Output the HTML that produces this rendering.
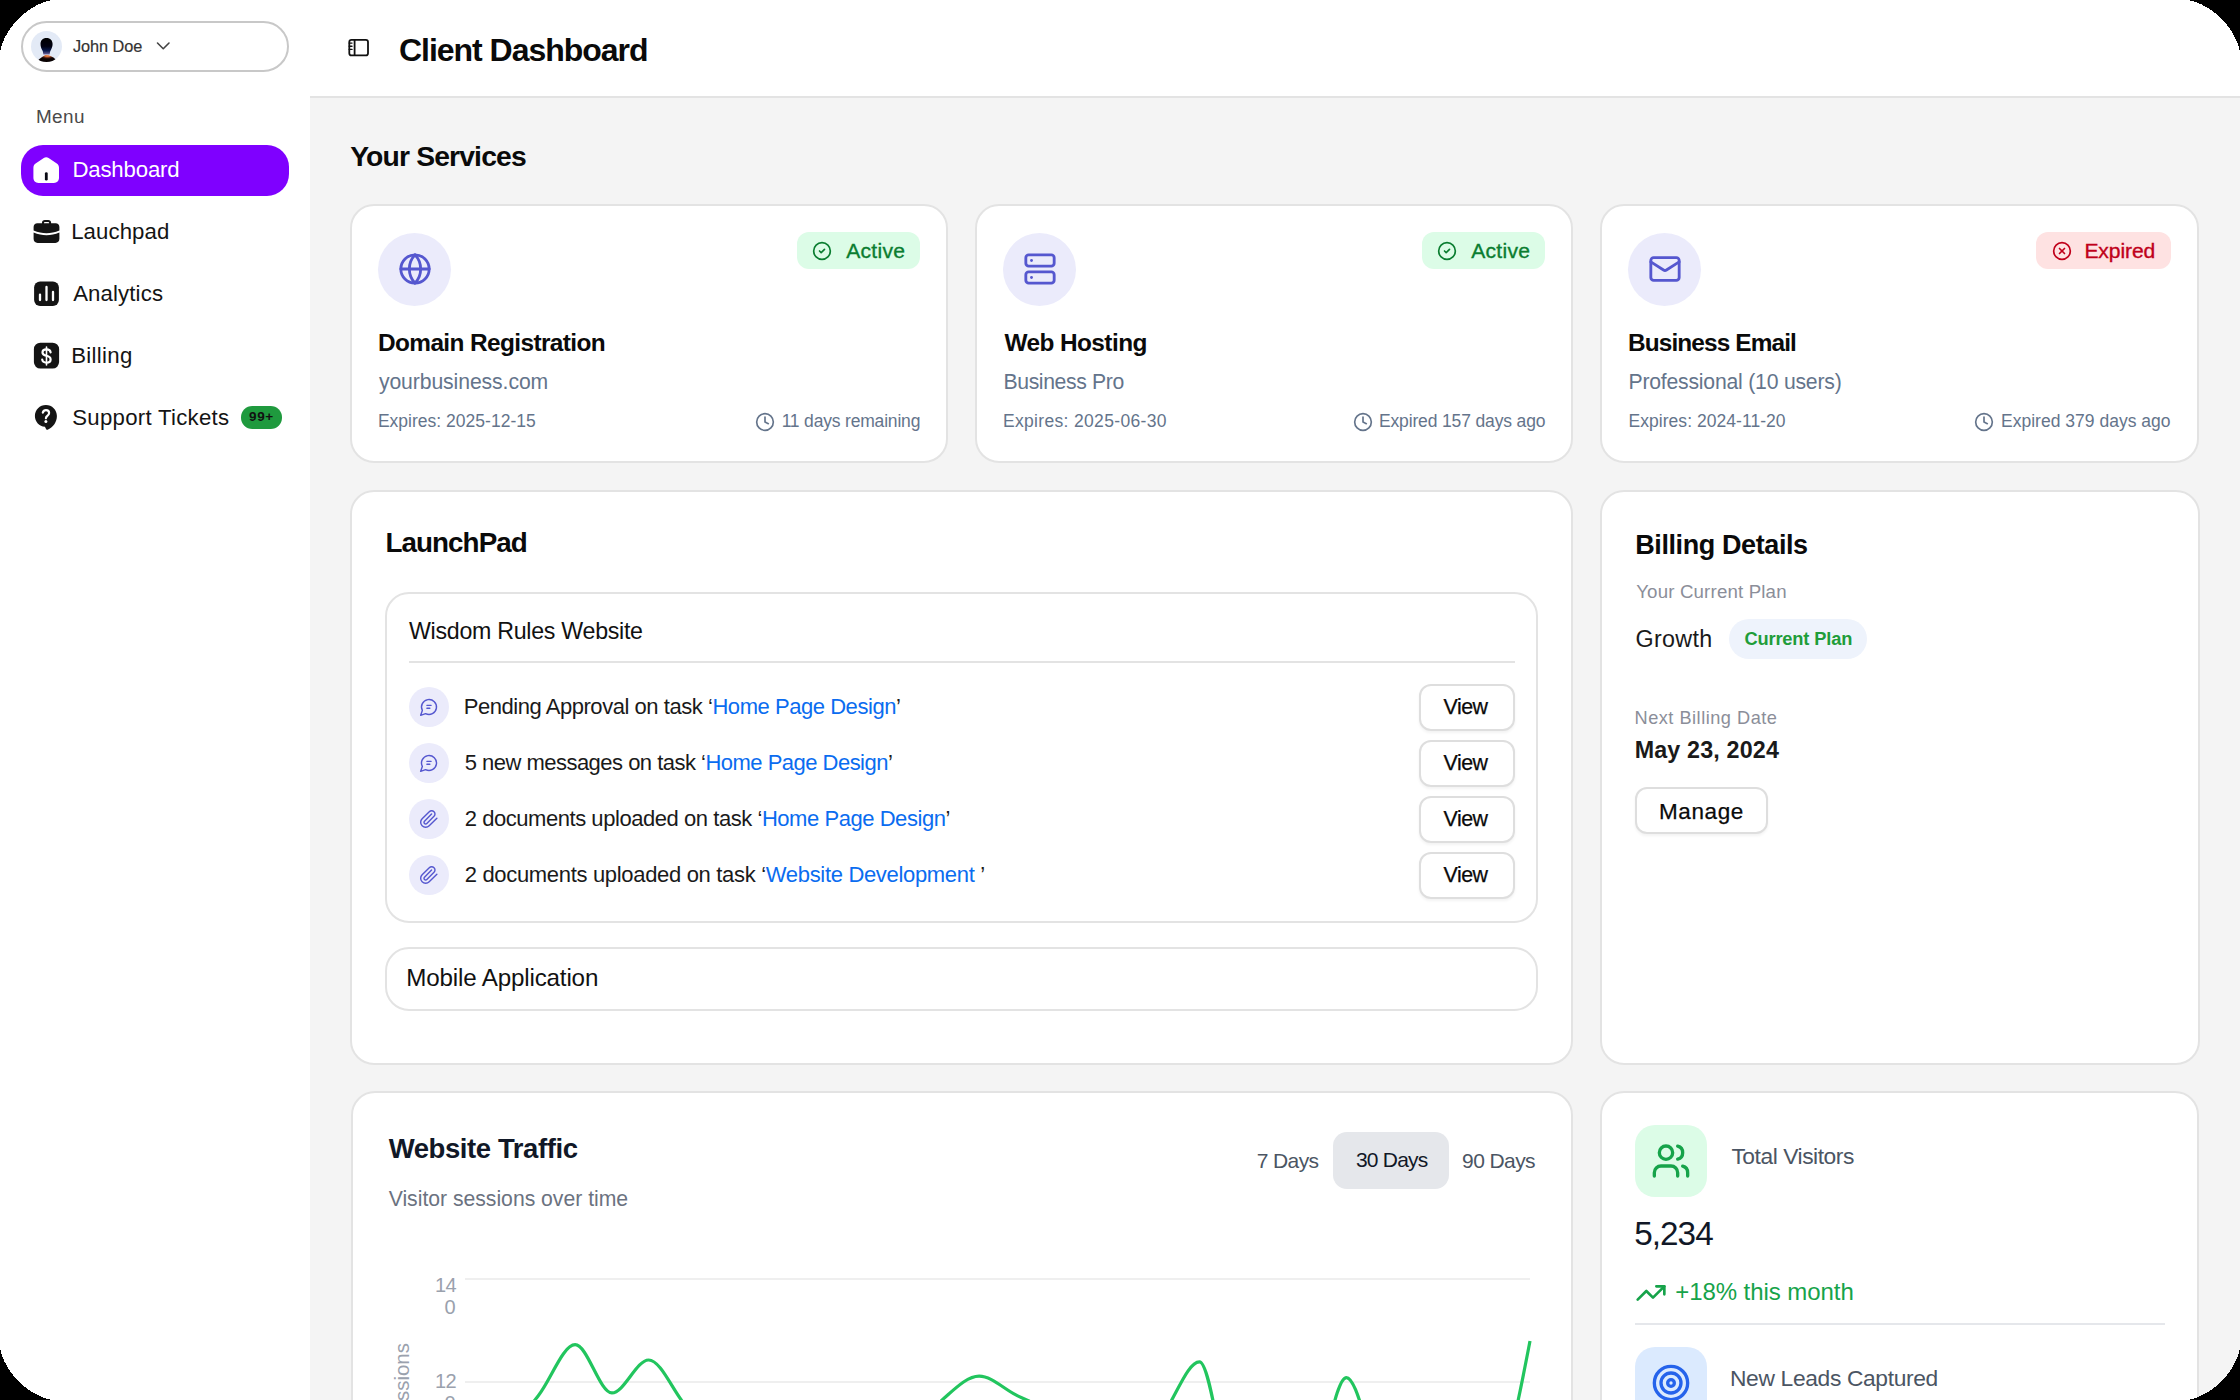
<!DOCTYPE html>
<html><head><meta charset="utf-8"><title>Client Dashboard</title>
<style>
html,body{margin:0;padding:0;background:#000;}
body{width:2240px;height:1400px;overflow:hidden;position:relative;font-family:"Liberation Sans", sans-serif;}
#app{position:absolute;left:0;top:0;width:2240px;height:1400px;overflow:hidden;background:#fff;}
#app div,#app svg{position:absolute;box-sizing:border-box;}
.t{line-height:1;white-space:nowrap;}
.card{background:#fff;border:2px solid #e3e3e3;border-radius:24px;}
</style></head><body><div id="app">
<div class="" style="left:310px;top:0px;width:1930px;height:96px;background:#fff;"></div>
<div class="" style="left:310px;top:96px;width:1930px;height:2px;background:#e3e3e3;"></div>
<div class="" style="left:310px;top:98px;width:1930px;height:1302px;background:#f4f4f4;"></div>
<div class="" style="left:21px;top:21px;width:268px;height:51px;border:2px solid #c8c8c8;border-radius:26px;"></div>
<div class="" style="left:31px;top:31px;width:31px;height:31px;background:#e3eaf6;border-radius:50%;overflow:hidden;"><svg width="31" height="31" viewBox="0 0 31 31" style="position:absolute;left:0;top:0"><defs><linearGradient id="ag" x1="0" y1="0" x2="0" y2="1"><stop offset="0" stop-color="#000"/><stop offset="0.5" stop-color="#000010"/><stop offset="0.78" stop-color="#0a1a50"/><stop offset="1" stop-color="#7a6aa0"/></linearGradient><radialGradient id="sg" cx="16.5" cy="24.5" r="8" gradientTransform="translate(16.5 24.5) scale(1 0.45) translate(-16.5 -24.5)" gradientUnits="userSpaceOnUse"><stop offset="0" stop-color="#f08a50"/><stop offset="0.35" stop-color="#d06a3a"/><stop offset="0.7" stop-color="#3a140c"/><stop offset="1" stop-color="#0a0202"/></radialGradient></defs><path d="M15.5 7 C11.6 7 9.5 9.6 9.5 13 C9.5 15.6 10.4 17.6 11.3 19.2 C11.9 20.3 12.2 21.5 12.3 23.6 L18.7 23.6 C18.8 21.5 19.2 20.3 19.8 19.2 C20.8 17.4 21.6 15.4 21.6 13 C21.6 9.6 19.4 7 15.5 7 Z" fill="url(#ag)"/><path d="M6.9 29.6 C8.6 27.6 11.5 25.5 13.5 24.5 C14.8 23.9 16.8 23.9 18.2 24.5 C20.5 25.5 23.5 27 24.9 28.6 C24.2 30.5 20 32 15.5 32 C11 32 7.5 31 6.9 29.6 Z" fill="url(#sg)"/></svg></div>
<div id="johndoe" class="t" style="left:72.9px;top:37.60px;font-size:16.3px;font-weight:400;color:#333;letter-spacing:-0.054px;-webkit-text-stroke:0.2px #333;">John Doe</div>
<svg class="ic" style="left:155px;top:40px" width="16" height="12" viewBox="0 0 16 12"><path d="M2.5 3 L8.25 8.7 L14 3" fill="none" stroke="#444" stroke-width="1.6" stroke-linecap="round" stroke-linejoin="round"/></svg>
<div id="menu" class="t" style="left:35.9px;top:108.00px;font-size:18.9px;font-weight:400;color:#4a4a4a;letter-spacing:0.465px;">Menu</div>
<div class="" style="left:21px;top:145px;width:268px;height:51px;background:#7f00ff;border-radius:22px;"></div>
<svg class="ic" style="left:28px;top:150px" width="40" height="40" viewBox="0 0 40 40"><path d="M18.2 7.2 C17.3 7.2 16.5 7.5 15.8 8 L7.6 13.6 C6.2 14.6 5.4 16 5.4 17.7 L5.4 27.8 C5.4 30.9 7.4 32.9 10.5 32.9 L25.9 32.9 C29 32.9 31 30.9 31 27.8 L31 17.7 C31 16 30.2 14.6 28.8 13.6 L20.6 8 C19.9 7.5 19.1 7.2 18.2 7.2 Z" fill="#fff"/><path d="M18.3 23.6 L18.3 29.2" stroke="#0a0a14" stroke-width="2.8" stroke-linecap="round"/></svg>
<div id="dash" class="t" style="left:72.4px;top:158.51px;font-size:22.2px;font-weight:400;color:#fff;letter-spacing:-0.158px;">Dashboard</div>
<svg class="ic" style="left:28px;top:212px" width="40" height="40" viewBox="0 0 40 40"><path d="M14 11.3 L14 10.6 C14 9 15.2 7.9 16.8 7.9 L20.3 7.9 C21.9 7.9 23.1 9 23.1 10.6 L23.1 11.3 L27.6 11.3 C29.8 11.3 31.4 12.9 31.4 15.1 L31.4 18.4 C27 20.2 22.8 21.2 18.5 21.2 C14.2 21.2 10 20.2 5.6 18.4 L5.6 15.1 C5.6 12.9 7.2 11.3 9.4 11.3 Z M16 11.3 L21.1 11.3 L21.1 10.7 C21.1 10.2 20.8 9.9 20.3 9.9 L16.8 9.9 C16.3 9.9 16 10.2 16 10.7 Z" fill="#141414" fill-rule="evenodd"/><path d="M5.6 20.4 C10 22.2 14.2 23.2 18.5 23.2 C22.8 23.2 27 22.2 31.4 20.4 L31.4 26.8 C31.4 29.2 29.8 30.9 27.4 30.9 L9.6 30.9 C7.2 30.9 5.6 29.2 5.6 26.8 Z" fill="#141414"/></svg>
<div id="lauch" class="t" style="left:71.2px;top:221.21px;font-size:22.2px;font-weight:400;color:#141414;letter-spacing:0.089px;">Lauchpad</div>
<svg class="ic" style="left:28px;top:274px" width="40" height="40" viewBox="0 0 40 40"><rect x="6.1" y="7.4" width="24.8" height="24.6" rx="6" fill="#141414"/><path d="M12 20.6 L12 26 M18.5 12.9 L18.5 26 M25 18 L25 26" stroke="#fff" stroke-width="2.3" stroke-linecap="round"/></svg>
<div id="analytics" class="t" style="left:73.2px;top:283.21px;font-size:22.2px;font-weight:400;color:#141414;letter-spacing:0.125px;">Analytics</div>
<svg class="ic" style="left:28px;top:336px" width="40" height="40" viewBox="0 0 40 40"><rect x="5.9" y="6.7" width="25.2" height="25.9" rx="6.5" fill="#141414"/><path d="M18.5 11 L18.5 28.9" stroke="#fff" stroke-width="1.6" stroke-linecap="round"/><path d="M22.6 16.3 C22.4 14.5 20.9 13.3 18.5 13.3 C16 13.3 14.5 14.6 14.5 16.4 C14.5 18.3 16.1 19.1 18.5 19.7 C21 20.3 22.6 21.2 22.6 23.4 C22.6 25.3 20.9 26.6 18.5 26.6 C16 26.6 14.4 25.4 14.2 23.5" fill="none" stroke="#fff" stroke-width="2.2" stroke-linecap="round"/></svg>
<div id="billing" class="t" style="left:71.2px;top:345.21px;font-size:22.2px;font-weight:400;color:#141414;letter-spacing:0.333px;">Billing</div>
<svg class="ic" style="left:28px;top:398px" width="40" height="40" viewBox="0 0 40 40"><path d="M17.9 6.9 C11.8 6.9 6.9 11.8 6.9 17.9 C6.9 23.6 11.3 28.3 16.9 28.8 L18.2 31.3 C18.7 32 19.5 32 20.1 31.4 C25.2 29.2 28.9 24 28.9 17.9 C28.9 11.8 24 6.9 17.9 6.9 Z" fill="#141414"/><path d="M14.8 14.6 C15.3 13 16.5 12.2 18 12.2 C19.9 12.2 21.1 13.3 21.1 14.9 C21.1 16.7 19.3 17.6 18.3 19 L17.9 20.3" fill="none" stroke="#fff" stroke-width="2.2" stroke-linecap="round"/><circle cx="17.9" cy="23.6" r="1.5" fill="#fff"/></svg>
<div id="support" class="t" style="left:72.2px;top:407.21px;font-size:22.2px;font-weight:400;color:#141414;letter-spacing:0.286px;">Support Tickets</div>
<div class="" style="left:240.7px;top:406.4px;width:41.3px;height:22.6px;background:#1f9a3e;border-radius:11.3px;"></div>
<div id="badge99" class="t" style="left:249.0px;top:410.47px;font-size:13.5px;font-weight:700;color:#111;letter-spacing:0.625px;">99+</div>
<svg class="ic" style="left:346px;top:37px" width="25" height="22" viewBox="0 0 25 22"><rect x="3.3" y="2.9" width="18.7" height="15.5" rx="2.2" fill="none" stroke="#111" stroke-width="1.8"/><path d="M8.6 2.9 L8.6 18.4" stroke="#111" stroke-width="1.8"/><path d="M3.2 6.1 L6 6.1 M3.2 9.25 L6 9.25 M3.2 12.4 L6 12.4" stroke="#111" stroke-width="1.4" stroke-linecap="round"/></svg>
<div id="title" class="t" style="left:399.0px;top:34.31px;font-size:32px;font-weight:700;color:#0a0a0a;letter-spacing:-1.033px;">Client Dashboard</div>
<div id="yoursvc" class="t" style="left:350.2px;top:142.14px;font-size:28.3px;font-weight:700;color:#0a0a0a;letter-spacing:-0.849px;">Your Services</div>
<div class="card" style="left:350px;top:204px;width:598px;height:259px;"></div>
<div class="" style="left:378px;top:232.5px;width:73px;height:73px;background:#ebebfb;border-radius:50%;"></div>
<svg class="ic" style="left:397.5px;top:252px;" width="34" height="34" viewBox="0 0 24 24" fill="none" stroke="#5557cf" stroke-width="2" stroke-linecap="round" stroke-linejoin="round"><circle cx="12" cy="12" r="10"/><path d="M12 2a14.5 14.5 0 0 0 0 20 14.5 14.5 0 0 0 0-20"/><path d="M2 12h20"/></svg>
<div class="" style="left:797px;top:232.4px;width:123px;height:36.5px;background:#dcfce7;border-radius:12px;"></div>
<svg class="ic" style="left:812.3px;top:240.6px;" width="20" height="20" viewBox="0 0 24 24" fill="none" stroke="#0a7d30" stroke-width="2" stroke-linecap="round" stroke-linejoin="round"><circle cx="12" cy="12" r="10"/><path d="m9 12 2 2 4-4"/></svg>
<div id="badge0" class="t" style="left:846.2px;top:239.74px;font-size:21.1px;font-weight:400;color:#0a7d30;letter-spacing:0.28px;-webkit-text-stroke:0.35px #0a7d30;">Active</div>
<div id="name0" class="t" style="left:378.0px;top:331.15px;font-size:24.4px;font-weight:700;color:#0a0a0a;letter-spacing:-0.603px;">Domain Registration</div>
<div id="sub0" class="t" style="left:378.9px;top:371.25px;font-size:21.2px;font-weight:400;color:#64748b;letter-spacing:-0.095px;">yourbusiness.com</div>
<div id="exp0" class="t" style="left:377.9px;top:413.09px;font-size:17.5px;font-weight:400;color:#64748b;letter-spacing:0.017px;">Expires: 2025-12-15</div>
<div id="rt0" class="t" style="margin-right:-0.2px;top:413.49px;font-size:17.5px;font-weight:400;color:#64748b;letter-spacing:-0.185px;left:auto;right:1320px;">11 days remaining</div>
<svg class="ic" style="left:755.1px;top:412.4px;" width="20" height="20" viewBox="0 0 24 24" fill="none" stroke="#64748b" stroke-width="2" stroke-linecap="round" stroke-linejoin="round"><circle cx="12" cy="12" r="10"/><polyline points="12 6 12 12 16 14"/></svg>
<div class="card" style="left:975px;top:204px;width:598px;height:259px;"></div>
<div class="" style="left:1003px;top:232.5px;width:73px;height:73px;background:#ebebfb;border-radius:50%;"></div>
<svg class="ic" style="left:1022.5px;top:252px;" width="34" height="34" viewBox="0 0 24 24" fill="none" stroke="#5557cf" stroke-width="2" stroke-linecap="round" stroke-linejoin="round"><rect width="20" height="8" x="2" y="2" rx="2" ry="2"/><rect width="20" height="8" x="2" y="14" rx="2" ry="2"/><line x1="6" x2="6.01" y1="6" y2="6"/><line x1="6" x2="6.01" y1="18" y2="18"/></svg>
<div class="" style="left:1422px;top:232.4px;width:123px;height:36.5px;background:#dcfce7;border-radius:12px;"></div>
<svg class="ic" style="left:1437.3px;top:240.6px;" width="20" height="20" viewBox="0 0 24 24" fill="none" stroke="#0a7d30" stroke-width="2" stroke-linecap="round" stroke-linejoin="round"><circle cx="12" cy="12" r="10"/><path d="m9 12 2 2 4-4"/></svg>
<div id="badge1" class="t" style="left:1471.2px;top:239.74px;font-size:21.1px;font-weight:400;color:#0a7d30;letter-spacing:0.28px;-webkit-text-stroke:0.35px #0a7d30;">Active</div>
<div id="name1" class="t" style="left:1004.4px;top:331.15px;font-size:24.4px;font-weight:700;color:#0a0a0a;letter-spacing:-0.56px;">Web Hosting</div>
<div id="sub1" class="t" style="left:1003.5px;top:371.25px;font-size:21.2px;font-weight:400;color:#64748b;letter-spacing:-0.379px;">Business Pro</div>
<div id="exp1" class="t" style="left:1002.9px;top:413.09px;font-size:17.5px;font-weight:400;color:#64748b;letter-spacing:0.334px;">Expires: 2025-06-30</div>
<div id="rt1" class="t" style="margin-right:-0.4px;top:413.49px;font-size:17.5px;font-weight:400;color:#64748b;letter-spacing:-0.143px;left:auto;right:695px;">Expired 157 days ago</div>
<svg class="ic" style="left:1352.5px;top:412.4px;" width="20" height="20" viewBox="0 0 24 24" fill="none" stroke="#64748b" stroke-width="2" stroke-linecap="round" stroke-linejoin="round"><circle cx="12" cy="12" r="10"/><polyline points="12 6 12 12 16 14"/></svg>
<div class="card" style="left:1600px;top:204px;width:599px;height:259px;"></div>
<div class="" style="left:1628px;top:232.5px;width:73px;height:73px;background:#ebebfb;border-radius:50%;"></div>
<svg class="ic" style="left:1647.5px;top:252px;" width="34" height="34" viewBox="0 0 24 24" fill="none" stroke="#5557cf" stroke-width="2" stroke-linecap="round" stroke-linejoin="round"><rect width="20" height="16" x="2" y="4" rx="2"/><path d="m22 7-8.97 5.7a1.94 1.94 0 0 1-2.06 0L2 7"/></svg>
<div class="" style="left:2036px;top:232.4px;width:135px;height:36.5px;background:#fee2e2;border-radius:12px;"></div>
<svg class="ic" style="left:2051.8px;top:240.8px;" width="20" height="20" viewBox="0 0 24 24" fill="none" stroke="#c0001a" stroke-width="2" stroke-linecap="round" stroke-linejoin="round"><circle cx="12" cy="12" r="10"/><path d="m15 9-6 6"/><path d="m9 9 6 6"/></svg>
<div id="badge2" class="t" style="left:2084.4px;top:239.74px;font-size:21.1px;font-weight:400;color:#c0001a;letter-spacing:-0.103px;-webkit-text-stroke:0.35px #c0001a;">Expired</div>
<div id="name2" class="t" style="left:1628.0px;top:331.15px;font-size:24.4px;font-weight:700;color:#0a0a0a;letter-spacing:-0.883px;">Business Email</div>
<div id="sub2" class="t" style="left:1628.5px;top:371.25px;font-size:21.2px;font-weight:400;color:#64748b;letter-spacing:-0.211px;">Professional (10 users)</div>
<div id="exp2" class="t" style="left:1628.5px;top:413.09px;font-size:17.5px;font-weight:400;color:#64748b;letter-spacing:0.043px;">Expires: 2024-11-20</div>
<div id="rt2" class="t" style="margin-right:0.4px;top:413.49px;font-size:17.5px;font-weight:400;color:#64748b;letter-spacing:0.016px;left:auto;right:69px;">Expired 379 days ago</div>
<svg class="ic" style="left:1974.4px;top:412.4px;" width="20" height="20" viewBox="0 0 24 24" fill="none" stroke="#64748b" stroke-width="2" stroke-linecap="round" stroke-linejoin="round"><circle cx="12" cy="12" r="10"/><polyline points="12 6 12 12 16 14"/></svg>
<div class="card" style="left:350px;top:490px;width:1223px;height:575px;"></div>
<div id="lp" class="t" style="left:385.4px;top:529.47px;font-size:27.8px;font-weight:700;color:#0a0a0a;letter-spacing:-0.925px;">LaunchPad</div>
<div class="card" style="left:385px;top:592px;width:1153px;height:331px;"></div>
<div id="wrw" class="t" style="left:409.0px;top:619.66px;font-size:23.2px;font-weight:400;color:#111;letter-spacing:-0.276px;">Wisdom Rules Website</div>
<div class="" style="left:409px;top:660.5px;width:1106px;height:2px;background:#e3e3e3;"></div>
<div class="" style="left:408.5px;top:687px;width:40px;height:40px;background:#ebebfb;border-radius:50%;"></div>
<svg class="ic" style="left:418.5px;top:697px;" width="20" height="20" viewBox="0 0 24 24" fill="none" stroke="#5557cf" stroke-width="1.7" stroke-linecap="round" stroke-linejoin="round"><path d="M7.9 20 A9 9 0 1 0 4 16.1 L2 22 Z"/><path d="M9.5 10h5"/><path d="M9.5 13.5h3.5"/></svg>
<div id="row0" class="t" style="left:463.7px;top:695.98px;font-size:22px;font-weight:400;color:#1a1a1a;letter-spacing:-0.453px;">Pending Approval on task ‘<span style="color:#0a6cf0">Home Page Design</span>’</div>
<div class="" style="left:1419px;top:683.5px;width:95.5px;height:47px;background:#fff;border:2px solid #dedede;border-radius:12px;box-shadow:0 2px 3px rgba(0,0,0,0.05);"></div>
<div id="view0" class="t" style="left:1443.6px;top:696.68px;font-size:21.4px;font-weight:400;color:#0a0a0a;letter-spacing:-0.529px;-webkit-text-stroke:0.25px #0a0a0a;">View</div>
<div class="" style="left:408.5px;top:743px;width:40px;height:40px;background:#ebebfb;border-radius:50%;"></div>
<svg class="ic" style="left:418.5px;top:753px;" width="20" height="20" viewBox="0 0 24 24" fill="none" stroke="#5557cf" stroke-width="1.7" stroke-linecap="round" stroke-linejoin="round"><path d="M7.9 20 A9 9 0 1 0 4 16.1 L2 22 Z"/><path d="M9.5 10h5"/><path d="M9.5 13.5h3.5"/></svg>
<div id="row1" class="t" style="left:464.7px;top:751.98px;font-size:22px;font-weight:400;color:#1a1a1a;letter-spacing:-0.517px;">5 new messages on task ‘<span style="color:#0a6cf0">Home Page Design</span>’</div>
<div class="" style="left:1419px;top:739.5px;width:95.5px;height:47px;background:#fff;border:2px solid #dedede;border-radius:12px;box-shadow:0 2px 3px rgba(0,0,0,0.05);"></div>
<div id="view1" class="t" style="left:1443.6px;top:752.68px;font-size:21.4px;font-weight:400;color:#0a0a0a;letter-spacing:-0.529px;-webkit-text-stroke:0.25px #0a0a0a;">View</div>
<div class="" style="left:408.5px;top:799px;width:40px;height:40px;background:#ebebfb;border-radius:50%;"></div>
<svg class="ic" style="left:418.5px;top:809px;" width="20" height="20" viewBox="0 0 24 24" fill="none" stroke="#5557cf" stroke-width="1.7" stroke-linecap="round" stroke-linejoin="round"><path d="m21.44 11.05-9.19 9.19a6 6 0 0 1-8.49-8.49l8.57-8.57A4 4 0 1 1 18 8.84l-8.59 8.57a2 2 0 0 1-2.83-2.83l8.49-8.48"/></svg>
<div id="row2" class="t" style="left:464.7px;top:807.98px;font-size:22px;font-weight:400;color:#1a1a1a;letter-spacing:-0.449px;">2 documents uploaded on task ‘<span style="color:#0a6cf0">Home Page Design</span>’</div>
<div class="" style="left:1419px;top:795.5px;width:95.5px;height:47px;background:#fff;border:2px solid #dedede;border-radius:12px;box-shadow:0 2px 3px rgba(0,0,0,0.05);"></div>
<div id="view2" class="t" style="left:1443.6px;top:808.68px;font-size:21.4px;font-weight:400;color:#0a0a0a;letter-spacing:-0.529px;-webkit-text-stroke:0.25px #0a0a0a;">View</div>
<div class="" style="left:408.5px;top:855px;width:40px;height:40px;background:#ebebfb;border-radius:50%;"></div>
<svg class="ic" style="left:418.5px;top:865px;" width="20" height="20" viewBox="0 0 24 24" fill="none" stroke="#5557cf" stroke-width="1.7" stroke-linecap="round" stroke-linejoin="round"><path d="m21.44 11.05-9.19 9.19a6 6 0 0 1-8.49-8.49l8.57-8.57A4 4 0 1 1 18 8.84l-8.59 8.57a2 2 0 0 1-2.83-2.83l8.49-8.48"/></svg>
<div id="row3" class="t" style="left:464.7px;top:863.98px;font-size:22px;font-weight:400;color:#1a1a1a;letter-spacing:-0.32px;">2 documents uploaded on task ‘<span style="color:#0a6cf0">Website Development </span>’</div>
<div class="" style="left:1419px;top:851.5px;width:95.5px;height:47px;background:#fff;border:2px solid #dedede;border-radius:12px;box-shadow:0 2px 3px rgba(0,0,0,0.05);"></div>
<div id="view3" class="t" style="left:1443.6px;top:864.68px;font-size:21.4px;font-weight:400;color:#0a0a0a;letter-spacing:-0.529px;-webkit-text-stroke:0.25px #0a0a0a;">View</div>
<div class="card" style="left:385px;top:947px;width:1153px;height:64px;"></div>
<div id="mobile" class="t" style="left:406.2px;top:966.41px;font-size:24.2px;font-weight:400;color:#111;letter-spacing:-0.165px;">Mobile Application</div>
<div class="card" style="left:1600px;top:490px;width:600px;height:575px;"></div>
<div id="bd" class="t" style="left:1635.2px;top:531.94px;font-size:27px;font-weight:700;color:#0a0a0a;letter-spacing:-0.402px;">Billing Details</div>
<div id="ycp" class="t" style="left:1636.2px;top:582.87px;font-size:18.7px;font-weight:400;color:#8b8e99;letter-spacing:0.156px;">Your Current Plan</div>
<div id="growth" class="t" style="left:1635.5px;top:627.88px;font-size:23.3px;font-weight:400;color:#1a1a1a;letter-spacing:0.34px;">Growth</div>
<div class="" style="left:1728.8px;top:618.8px;width:138px;height:40px;background:#eef3fc;border-radius:20px;"></div>
<div id="cp" class="t" style="left:1744.4px;top:630.41px;font-size:18.3px;font-weight:700;color:#1f9d3a;letter-spacing:-0.158px;">Current Plan</div>
<div id="nbd" class="t" style="left:1634.5px;top:709.09px;font-size:18.2px;font-weight:400;color:#8b8e99;letter-spacing:0.5px;">Next Billing Date</div>
<div id="may" class="t" style="left:1634.7px;top:739.28px;font-size:23.3px;font-weight:700;color:#1a1a1a;letter-spacing:0.159px;">May 23, 2024</div>
<div class="" style="left:1635.4px;top:787.2px;width:133px;height:47px;background:#fff;border:2px solid #dedede;border-radius:12px;box-shadow:0 2px 3px rgba(0,0,0,0.05);"></div>
<div id="manage" class="t" style="left:1659.0px;top:800.95px;font-size:22.5px;font-weight:400;color:#0a0a0a;letter-spacing:0.6px;-webkit-text-stroke:0.25px #0a0a0a;">Manage</div>
<div class="card" style="left:351px;top:1091px;width:1222px;height:400px;"></div>
<div id="wt" class="t" style="left:388.7px;top:1134.62px;font-size:27.5px;font-weight:700;color:#111827;letter-spacing:-0.415px;">Website Traffic</div>
<div id="vs" class="t" style="left:388.7px;top:1187.55px;font-size:21.2px;font-weight:400;color:#6b7280;letter-spacing:-0.016px;">Visitor sessions over time</div>
<div id="d7" class="t" style="left:1256.7px;top:1149.82px;font-size:21px;font-weight:400;color:#4b5563;letter-spacing:-0.6px;">7 Days</div>
<div class="" style="left:1333px;top:1131.7px;width:116.2px;height:57.6px;background:#e5e7eb;border-radius:14px;"></div>
<div id="d30" class="t" style="left:1355.9px;top:1149.02px;font-size:21px;font-weight:400;color:#111827;letter-spacing:-0.771px;">30 Days</div>
<div id="d90" class="t" style="left:1462.1px;top:1149.82px;font-size:21px;font-weight:400;color:#4b5563;letter-spacing:-0.597px;">90 Days</div>
<div class="" style="left:465px;top:1278px;width:1065px;height:2px;background:#efefef;"></div>
<div class="" style="left:465px;top:1381px;width:1065px;height:2px;background:#efefef;"></div>
<div id="ax141291.5" class="t" style="left:435px;top:1274.57px;font-size:20px;font-weight:400;color:#9aa1ad;letter-spacing:-0.5px;">14</div>
<div id="ax01313.5" class="t" style="left:444.5px;top:1296.57px;font-size:20px;font-weight:400;color:#9aa1ad;letter-spacing:-0.5px;">0</div>
<div id="ax121388" class="t" style="left:435px;top:1371.07px;font-size:20px;font-weight:400;color:#9aa1ad;letter-spacing:-0.5px;">12</div>
<div id="ax01410" class="t" style="left:444.5px;top:1393.07px;font-size:20px;font-weight:400;color:#9aa1ad;letter-spacing:-0.5px;">0</div>
<div class="t" style="left:391.6px;top:1343px;font-size:20.5px;color:#9aa1ad;transform-origin:0 0;transform:rotate(-90deg) translateX(-100%);letter-spacing:0px;line-height:1">Sessions</div>
<svg class="ic" style="left:0;top:0" width="2240" height="1400" viewBox="0 0 2240 1400"><path d="M465.00,1440.80C477.24,1440.03,489.48,1439.27,501.72,1436.20C513.97,1433.13,526.21,1410.65,538.45,1395.40C550.69,1380.15,562.93,1344.70,575.17,1344.70C587.41,1344.70,599.66,1392.90,611.90,1392.90C624.14,1392.90,636.38,1360.00,648.62,1360.00C660.86,1360.00,673.10,1391.60,685.34,1405.20C697.59,1418.80,709.83,1441.60,722.07,1441.60C734.31,1441.60,746.55,1440.00,758.79,1440.00C771.03,1440.00,783.28,1440.00,795.52,1440.00C807.76,1440.00,820.00,1440.00,832.24,1440.00C844.48,1440.00,856.72,1440.00,868.97,1440.00C881.21,1440.00,893.45,1439.93,905.69,1439.80C917.93,1439.67,930.17,1410.30,942.41,1399.70C954.66,1389.10,966.90,1376.20,979.14,1376.20C991.38,1376.20,1003.62,1388.70,1015.86,1394.90C1028.10,1401.10,1040.34,1405.57,1052.59,1413.40C1064.83,1421.23,1077.07,1435.25,1089.31,1441.90C1101.55,1448.55,1113.79,1453.30,1126.03,1453.30C1138.28,1453.30,1150.52,1429.63,1162.76,1414.40C1175.00,1399.17,1187.24,1361.90,1199.48,1361.90C1211.72,1361.90,1223.97,1487.20,1236.21,1487.20C1248.45,1487.20,1260.69,1440.00,1272.93,1440.00C1285.17,1440.00,1297.41,1475.30,1309.66,1475.30C1321.90,1475.30,1334.14,1377.60,1346.38,1377.60C1358.62,1377.60,1370.86,1455.30,1383.10,1455.30C1395.34,1455.30,1407.59,1440.00,1419.83,1440.00C1432.07,1440.00,1444.31,1440.00,1456.55,1440.00C1468.79,1440.00,1481.03,1468.70,1493.28,1468.70C1505.52,1468.70,1517.76,1404.85,1530.00,1341.00" fill="none" stroke="#22c55e" stroke-width="3.2" stroke-linejoin="round"/></svg>
<div class="card" style="left:1600px;top:1091px;width:599px;height:400px;"></div>
<div class="" style="left:1635px;top:1125px;width:72px;height:72px;background:#dcfce7;border-radius:20px;"></div>
<svg class="ic" style="left:1650.5px;top:1141px;" width="40" height="40" viewBox="0 0 24 24" fill="none" stroke="#16a34a" stroke-width="2" stroke-linecap="round" stroke-linejoin="round"><path d="M16 21v-2a4 4 0 0 0-4-4H6a4 4 0 0 0-4 4v2"/><circle cx="9" cy="7" r="4"/><path d="M22 21v-2a4 4 0 0 0-3-3.87"/><path d="M16 3.13a4 4 0 0 1 0 7.75"/></svg>
<div id="tv" class="t" style="left:1731.4px;top:1145.40px;font-size:22.8px;font-weight:400;color:#4b5563;letter-spacing:-0.451px;">Total Visitors</div>
<div id="num" class="t" style="left:1634.2px;top:1216.81px;font-size:33.3px;font-weight:400;color:#111827;letter-spacing:-0.95px;">5,234</div>
<svg class="ic" style="left:1634.7px;top:1276.9px;" width="32" height="32" viewBox="0 0 24 24" fill="none" stroke="#16a34a" stroke-width="2" stroke-linecap="round" stroke-linejoin="round"><polyline points="22 7 13.5 15.5 8.5 10.5 2 17"/><polyline points="16 7 22 7 22 13"/></svg>
<div id="pct" class="t" style="left:1675.2px;top:1280.38px;font-size:24px;font-weight:400;color:#16a34a;letter-spacing:-0.059px;">+18% this month</div>
<div class="" style="left:1635px;top:1323px;width:1530px;height:2px;background:#e5e7eb;width:530px;"></div>
<div class="" style="left:1635px;top:1347px;width:72px;height:72px;background:#dbeafe;border-radius:20px;"></div>
<svg class="ic" style="left:1650.6px;top:1362.8px;" width="40" height="40" viewBox="0 0 24 24" fill="none" stroke="#2563eb" stroke-width="2" stroke-linecap="round" stroke-linejoin="round"><circle cx="12" cy="12" r="10"/><circle cx="12" cy="12" r="6"/><circle cx="12" cy="12" r="2"/></svg>
<div id="leads" class="t" style="left:1730.0px;top:1367.40px;font-size:22.8px;font-weight:400;color:#4b5563;letter-spacing:-0.347px;">New Leads Captured</div>
<svg class="ic" style="left:0;top:0;z-index:50" width="2240" height="1400" viewBox="0 0 2240 1400" shape-rendering="crispEdges"><path d="M0.00,0.00 L54.50,0.00 L53.64,0.04 L52.50,0.14 L51.24,0.32 L49.88,0.56 L48.46,0.88 L46.98,1.27 L45.46,1.72 L43.91,2.24 L42.33,2.83 L40.73,3.49 L39.11,4.20 L37.49,4.99 L35.86,5.83 L34.23,6.74 L32.60,7.70 L30.98,8.72 L29.37,9.80 L27.77,10.92 L26.19,12.10 L24.64,13.33 L23.11,14.61 L21.60,15.93 L20.13,17.29 L18.69,18.69 L17.29,20.13 L15.93,21.60 L14.61,23.11 L13.33,24.64 L12.10,26.19 L10.92,27.77 L9.80,29.37 L8.72,30.98 L7.70,32.60 L6.74,34.23 L5.83,35.86 L4.99,37.49 L4.20,39.11 L3.49,40.73 L2.83,42.33 L2.24,43.91 L1.72,45.46 L1.27,46.98 L0.88,48.46 L0.56,49.88 L0.32,51.24 L0.14,52.50 L0.04,53.64 L0.00,54.50 Z" fill="#000"/><path d="M0.00,0.00 L54.50,0.00 L53.64,0.04 L52.50,0.14 L51.24,0.32 L49.88,0.56 L48.46,0.88 L46.98,1.27 L45.46,1.72 L43.91,2.24 L42.33,2.83 L40.73,3.49 L39.11,4.20 L37.49,4.99 L35.86,5.83 L34.23,6.74 L32.60,7.70 L30.98,8.72 L29.37,9.80 L27.77,10.92 L26.19,12.10 L24.64,13.33 L23.11,14.61 L21.60,15.93 L20.13,17.29 L18.69,18.69 L17.29,20.13 L15.93,21.60 L14.61,23.11 L13.33,24.64 L12.10,26.19 L10.92,27.77 L9.80,29.37 L8.72,30.98 L7.70,32.60 L6.74,34.23 L5.83,35.86 L4.99,37.49 L4.20,39.11 L3.49,40.73 L2.83,42.33 L2.24,43.91 L1.72,45.46 L1.27,46.98 L0.88,48.46 L0.56,49.88 L0.32,51.24 L0.14,52.50 L0.04,53.64 L0.00,54.50 Z" fill="#000" transform="translate(2240,0) scale(-1,1)"/><path d="M0.00,0.00 L54.50,0.00 L53.64,0.04 L52.50,0.14 L51.24,0.32 L49.88,0.56 L48.46,0.88 L46.98,1.27 L45.46,1.72 L43.91,2.24 L42.33,2.83 L40.73,3.49 L39.11,4.20 L37.49,4.99 L35.86,5.83 L34.23,6.74 L32.60,7.70 L30.98,8.72 L29.37,9.80 L27.77,10.92 L26.19,12.10 L24.64,13.33 L23.11,14.61 L21.60,15.93 L20.13,17.29 L18.69,18.69 L17.29,20.13 L15.93,21.60 L14.61,23.11 L13.33,24.64 L12.10,26.19 L10.92,27.77 L9.80,29.37 L8.72,30.98 L7.70,32.60 L6.74,34.23 L5.83,35.86 L4.99,37.49 L4.20,39.11 L3.49,40.73 L2.83,42.33 L2.24,43.91 L1.72,45.46 L1.27,46.98 L0.88,48.46 L0.56,49.88 L0.32,51.24 L0.14,52.50 L0.04,53.64 L0.00,54.50 Z" fill="#000" transform="translate(0,1400) scale(1,-1)"/><path d="M0.00,0.00 L54.50,0.00 L53.64,0.04 L52.50,0.14 L51.24,0.32 L49.88,0.56 L48.46,0.88 L46.98,1.27 L45.46,1.72 L43.91,2.24 L42.33,2.83 L40.73,3.49 L39.11,4.20 L37.49,4.99 L35.86,5.83 L34.23,6.74 L32.60,7.70 L30.98,8.72 L29.37,9.80 L27.77,10.92 L26.19,12.10 L24.64,13.33 L23.11,14.61 L21.60,15.93 L20.13,17.29 L18.69,18.69 L17.29,20.13 L15.93,21.60 L14.61,23.11 L13.33,24.64 L12.10,26.19 L10.92,27.77 L9.80,29.37 L8.72,30.98 L7.70,32.60 L6.74,34.23 L5.83,35.86 L4.99,37.49 L4.20,39.11 L3.49,40.73 L2.83,42.33 L2.24,43.91 L1.72,45.46 L1.27,46.98 L0.88,48.46 L0.56,49.88 L0.32,51.24 L0.14,52.50 L0.04,53.64 L0.00,54.50 Z" fill="#000" transform="translate(2240,1400) scale(-1,-1)"/></svg>
</div></body></html>
